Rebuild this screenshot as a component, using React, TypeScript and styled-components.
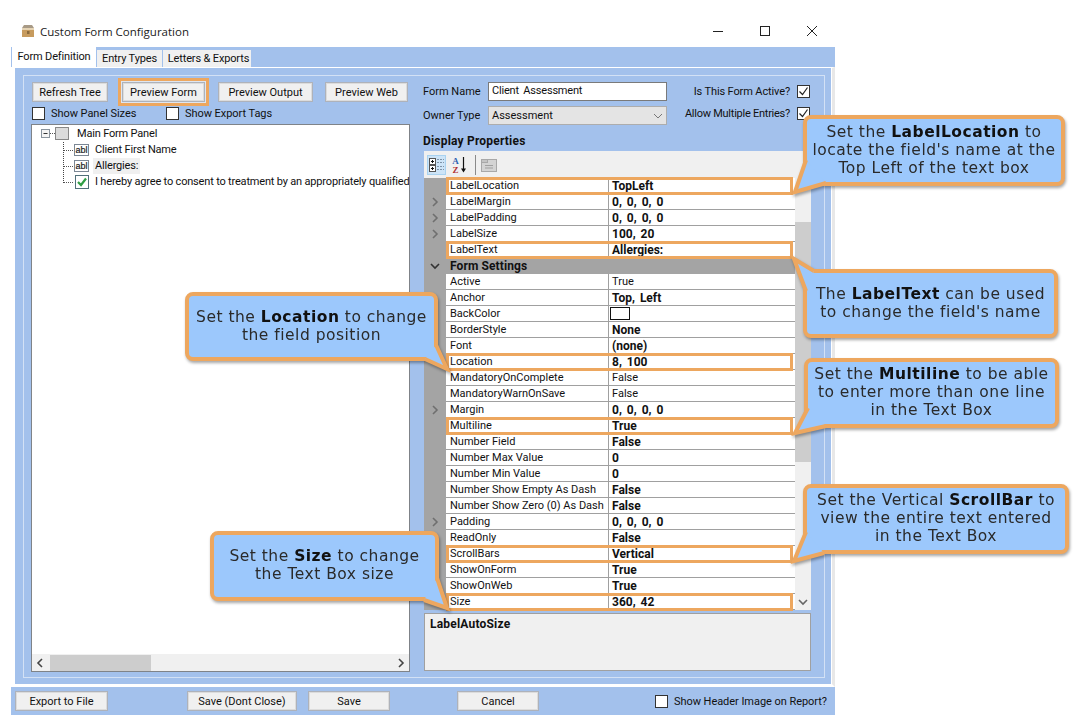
import React from "react";
import styled, { createGlobalStyle } from "styled-components";

const GlobalStyle = createGlobalStyle`
  html, body { margin: 0; padding: 0; background: #fff; }
  body { font-family: Roboto, "Liberation Sans", sans-serif; font-size: 11px; color: #111; }
`;

const BLUE = "#a3c1ec";
const ORANGE = "#eda75f";

type RowData = {
  name: string;
  value?: string;
  bold?: boolean;
  arrow?: boolean;
  mark?: boolean;
  section?: boolean;
  swatch?: boolean;
};

const rows: RowData[] = [
  { name: "LabelLocation", value: "TopLeft", bold: true, mark: true },
  { name: "LabelMargin", value: "0, 0, 0, 0", bold: true, arrow: true },
  { name: "LabelPadding", value: "0, 0, 0, 0", bold: true, arrow: true },
  { name: "LabelSize", value: "100, 20", bold: true, arrow: true },
  { name: "LabelText", value: "Allergies:", bold: true, mark: true },
  { name: "Form Settings", section: true },
  { name: "Active", value: "True" },
  { name: "Anchor", value: "Top, Left", bold: true },
  { name: "BackColor", swatch: true },
  { name: "BorderStyle", value: "None", bold: true },
  { name: "Font", value: "(none)", bold: true },
  { name: "Location", value: "8, 100", bold: true, mark: true },
  { name: "MandatoryOnComplete", value: "False" },
  { name: "MandatoryWarnOnSave", value: "False" },
  { name: "Margin", value: "0, 0, 0, 0", bold: true, arrow: true },
  { name: "Multiline", value: "True", bold: true, mark: true },
  { name: "Number Field", value: "False", bold: true },
  { name: "Number Max Value", value: "0", bold: true },
  { name: "Number Min Value", value: "0", bold: true },
  { name: "Number Show Empty As Dash", value: "False", bold: true },
  { name: "Number Show Zero (0) As Dash", value: "False", bold: true },
  { name: "Padding", value: "0, 0, 0, 0", bold: true, arrow: true },
  { name: "ReadOnly", value: "False", bold: true },
  { name: "ScrollBars", value: "Vertical", bold: true, mark: true },
  { name: "ShowOnForm", value: "True", bold: true },
  { name: "ShowOnWeb", value: "True", bold: true },
  { name: "Size", value: "360, 42", bold: true, mark: true },
];

const BoxIcon = () => (
  <svg width="16" height="16" viewBox="0 0 16 16">
    <path d="M2 5 L4 2 H12 L14 5 Z" fill="#a89a86" />
    <rect x="2" y="5" width="12" height="9" fill="#c79b5e" />
    <rect x="2" y="5" width="12" height="2" fill="#e6d4b4" />
    <rect x="7" y="8" width="2.5" height="3" fill="#8a6a3c" />
  </svg>
);

const Minimize = () => (
  <svg width="12" height="12" viewBox="0 0 12 12"><path d="M1 6.5H11" stroke="#222" fill="none" /></svg>
);
const Maximize = () => (
  <svg width="12" height="12" viewBox="0 0 12 12"><rect x="1.5" y="1.5" width="9" height="9" stroke="#222" fill="none" /></svg>
);
const CloseX = () => (
  <svg width="12" height="12" viewBox="0 0 12 12"><path d="M1 1L11 11M11 1L1 11" stroke="#222" fill="none" /></svg>
);

const Expander = () => (
  <svg width="29" height="16" viewBox="0 0 29 16">
    <rect x="0.5" y="3.5" width="8" height="8" fill="#f4f4f4" stroke="#8a949e" />
    <path d="M2.5 7.5H6.5" stroke="#333" />
    <path d="M9 7.5H14" stroke="#555" strokeDasharray="1 1" />
    <rect x="14.5" y="1.5" width="13" height="12" fill="#dcdcdc" stroke="#222" strokeDasharray="1 1" />
  </svg>
);

const AblIcon = () => (
  <svg width="16" height="16" viewBox="0 0 16 16">
    <rect x="0.5" y="2.5" width="14" height="11" fill="#fff" stroke="#7b8794" />
    <text x="7.5" y="11" textAnchor="middle" fontSize="9" fontFamily="'Liberation Sans', sans-serif" fontWeight="400" stroke="#222" strokeWidth="0.2" fill="#222">abl</text>
  </svg>
);

const CheckIcon = () => (
  <svg width="16" height="16" viewBox="0 0 16 16">
    <rect x="1.5" y="1.5" width="13" height="13" fill="#fff" stroke="#51707a" />
    <path d="M4 8L7 11L12 4.5" stroke="#2f9e44" strokeWidth="2.2" fill="none" />
  </svg>
);

const Link = ({ last }: { last?: boolean }) => (
  <svg width="11" height="16" viewBox="0 0 11 16">
    <path d={last ? "M0.5 0V9" : "M0.5 0V16"} stroke="#444" strokeDasharray="1 1" />
    <path d="M1 8.5H11" stroke="#555" strokeDasharray="1 1" />
  </svg>
);

const CategoryIcon = () => (
  <svg width="16" height="16" viewBox="0 0 16 16">
    <rect x="0.5" y="1.5" width="6" height="6" fill="#fff" stroke="#555" />
    <rect x="0.5" y="8.5" width="6" height="6" fill="#fff" stroke="#555" />
    <path d="M2 4.5H5M3.5 3V6M2 11.5H5M3.5 10V13" stroke="#111" />
    <path d="M8 2.5H15M8 5.5H15M8 9.5H15M8 12.5H15" stroke="#7f93a8" strokeDasharray="2 1" />
  </svg>
);

const SortIcon = () => (
  <svg width="16" height="18" viewBox="0 0 16 18">
    <text x="4.5" y="8" textAnchor="middle" fontSize="9" fontWeight="700" fontFamily="'Liberation Serif', serif" fill="#2d5fb0">A</text>
    <text x="4.5" y="16.5" textAnchor="middle" fontSize="9" fontWeight="700" fontFamily="'Liberation Serif', serif" fill="#b03030">Z</text>
    <path d="M12.5 1V15" stroke="#111" strokeWidth="1.2" />
    <path d="M10 12.5L12.5 16.5L15 12.5Z" fill="#111" />
  </svg>
);

const PagesIcon = () => (
  <svg width="16" height="16" viewBox="0 0 16 16">
    <rect x="0.5" y="2.5" width="15" height="12" fill="#d4d4d4" stroke="#a8a8a8" />
    <rect x="0.5" y="2.5" width="6" height="3" fill="#c4c4c4" stroke="#a8a8a8" />
    <path d="M4 8.5H12M4 11H12" stroke="#a0a0a0" />
  </svg>
);

const Chevron = ({ dir, color = "#6f6f6f", weight = 1.6 }: { dir: "right" | "down" | "left" | "up"; color?: string; weight?: number }) => {
  const paths = { right: "M3 1L7 5L3 9", down: "M1 3L5 7L9 3", left: "M7 1L3 5L7 9", up: "M1 7L5 3L9 7" };
  return (
    <svg width="10" height="10" viewBox="0 0 10 10">
      <path d={paths[dir]} fill="none" stroke={color} strokeWidth={weight} />
    </svg>
  );
};

const FlagTick = () => (
  <svg width="11" height="11" viewBox="0 0 11 11">
    <path d="M1.5 5.5L4.5 8.5L9.5 1.5" fill="none" stroke="#222" strokeWidth="1.2" />
  </svg>
);

const Callout = ({ left, top, width, height, tail, children }: {
  left: number; top: number; width: number; height: number; tail: string; children: React.ReactNode;
}) => (
  <CalloutLayer>
    <Bubble $left={left} $top={top} $width={width} $height={height}><span>{children}</span></Bubble>
    <TailSvg viewBox="0 0 1080 725">
      <path d={tail} fill="#9cc8fc" stroke={ORANGE} strokeWidth="4" strokeLinejoin="miter" />
    </TailSvg>
  </CalloutLayer>
);

export default function App() {
  return (
    <Page>
      <GlobalStyle />
      <TitleBar>
        <BoxIcon />
        <Title>Custom Form Configuration</Title>
        <WindowButtons>
          <Minimize />
          <Maximize />
          <CloseX />
        </WindowButtons>
      </TitleBar>
      <Win>
        <TabStrip>
          <Tab $active $w={84}>Form Definition</Tab>
          <Tab $w={65}>Entry Types</Tab>
          <Tab $w={88} $shift={3}>Letters &amp; Exports</Tab>
        </TabStrip>
        <TabPage>
          <GroupBox>
            <LeftCol>
              <ButtonRow>
                <PushButton $w={76} $ml={1}>Refresh Tree</PushButton>
                <PushButton $w={83} $ml={14} $mark>Preview Form</PushButton>
                <PushButton $w={95} $ml={13}>Preview Output</PushButton>
                <PushButton $w={83} $ml={12}>Preview Web</PushButton>
              </ButtonRow>
              <CheckRow>
                <Check $ml={1} />
                <CheckLabel $w={115}>Show Panel Sizes</CheckLabel>
                <Check />
                <CheckLabel>Show Export Tags</CheckLabel>
              </CheckRow>
              <Tree>
                <TreeBody>
                  <TreeRow $pad={9}>
                    <Expander />
                    <TreeText $root>Main Form Panel</TreeText>
                  </TreeRow>
                  <TreeRow $pad={31}>
                    <Link />
                    <AblIcon />
                    <TreeText>Client First Name</TreeText>
                  </TreeRow>
                  <TreeRow $pad={31}>
                    <Link />
                    <AblIcon />
                    <TreeText $selected>Allergies:</TreeText>
                  </TreeRow>
                  <TreeRow $pad={31}>
                    <Link last />
                    <CheckIcon />
                    <TreeText>I hereby agree to consent to treatment by an appropriately qualified</TreeText>
                  </TreeRow>
                </TreeBody>
                <HScroll>
                  <Chevron dir="left" color="#444" />
                  <HThumb />
                  <Chevron dir="right" color="#444" />
                </HScroll>
              </Tree>
            </LeftCol>
            <RightCol>
              <FieldRow>
                <FieldLabel>Form Name</FieldLabel>
                <TextBox>Client Assessment</TextBox>
                <FlagLabel>Is This Form Active?</FlagLabel>
                <Flag><FlagTick /></Flag>
              </FieldRow>
              <FieldRow $mt={5}>
                <FieldLabel>Owner Type</FieldLabel>
                <Combo>
                  Assessment
                  <Chevron dir="down" color="#777" weight={1} />
                </Combo>
                <FlagLabel $up>Allow Multiple Entries?</FlagLabel>
                <Flag $up><FlagTick /></Flag>
              </FieldRow>
              <Heading>Display Properties</Heading>
              <GridToolbar>
                <ToolButton $on><CategoryIcon /></ToolButton>
                <ToolButton><SortIcon /></ToolButton>
                <ToolSep />
                <ToolButton><PagesIcon /></ToolButton>
              </GridToolbar>
              <GridArea>
                <GridRows>
                  {rows.map((r) =>
                    r.section ? (
                      <SectionRow key={r.name}>
                        <Gutter><Chevron dir="down" color="#333" /></Gutter>
                        <SectionName>{r.name}</SectionName>
                      </SectionRow>
                    ) : (
                      <PropRow key={r.name + r.value} $mark={r.mark}>
                        <Gutter>{r.arrow ? <Chevron dir="right" /> : null}</Gutter>
                        <PropName>{r.name}</PropName>
                        <PropValue $bold={r.bold}>{r.swatch ? <Swatch /> : r.value}</PropValue>
                      </PropRow>
                    )
                  )}
                </GridRows>
                <VScroll>
                  <Chevron dir="up" color="#666" />
                  <VTrack><VThumb /></VTrack>
                  <Chevron dir="down" color="#666" />
                </VScroll>
              </GridArea>
              <HelpPane>LabelAutoSize</HelpPane>
            </RightCol>
          </GroupBox>
        </TabPage>
        <BottomBar>
          <PushButton $w={93} $ml={4}>Export to File</PushButton>
          <PushButton $w={110} $ml={79}>Save (Dont Close)</PushButton>
          <PushButton $w={82} $ml={11}>Save</PushButton>
          <PushButton $w={82} $ml={67}>Cancel</PushButton>
          <Check $ml={116} />
          <CheckLabel>Show Header Image on Report?</CheckLabel>
        </BottomBar>
      </Win>

      <Callout left={803} top={115} width={262} height={71} tail="M806 160L795 192L826 183">
        Set the <b>LabelLocation</b> to<br />locate the field's name at the<br />Top Left of the text box
      </Callout>
      <Callout left={803} top={269} width={255} height={69} tail="M814 271L794 259L806 291">
        The <b>LabelText</b> can be used<br />to change the field's name
      </Callout>
      <Callout left={185} top={292} width={253} height={69} tail="M436 345L447 369L425 359">
        Set the <b>Location</b> to change<br />the field position
      </Callout>
      <Callout left={804} top={358} width={255} height={70} tail="M808 408L795 433L826 426">
        Set the <b>Multiline</b> to be able<br />to enter more than one line<br />in the Text Box
      </Callout>
      <Callout left={803} top={484} width={266} height={70} tail="M806 532L794 561L824 553">
        Set the Vertical <b>ScrollBar</b> to<br />view the entire text entered<br />in the Text Box
      </Callout>
      <Callout left={210} top={531} width={229} height={70} tail="M437 578L447 608L424 600">
        Set the <b>Size</b> to change<br />the Text Box size
      </Callout>
    </Page>
  );
}

const Page = styled.div`
  position: relative;
  width: 1080px;
  height: 725px;
  overflow: hidden;
  background: #fff;
`;

const TitleBar = styled.div`
  height: 47px;
  box-sizing: border-box;
  padding: 15px 0 0 20px;
  display: flex;
  align-items: center;
`;

const Title = styled.div`
  margin-left: 4px;
  font-family: "Open Sans", sans-serif;
  font-size: 11.5px;
  color: #222;
`;

const WindowButtons = styled.div`
  margin-left: auto;
  width: 106px;
  margin-right: 262px;
  display: flex;
  justify-content: space-between;
`;

const Win = styled.div`
  margin-left: 11px;
  width: 824px;
`;

const TabStrip = styled.div`
  height: 20px;
  background: ${BLUE};
  display: flex;
  align-items: flex-end;
  padding-left: 1px;
`;

const Tab = styled.div<{ $active?: boolean; $w: number; $shift?: number }>`
  position: relative;
  box-sizing: border-box;
  width: ${(p) => p.$w}px;
  height: ${(p) => (p.$active ? "21px" : "17px")};
  margin-right: 1px;
  margin-bottom: ${(p) => (p.$active ? "-1px" : "0")};
  background: ${(p) => (p.$active ? "#fff" : "#f0f0f0")};
  letter-spacing: -0.15px;
  display: flex;
  align-items: center;
  justify-content: center;
  padding-left: ${(p) => p.$shift ?? 0}px;
  padding-bottom: ${(p) => (p.$active ? "2px" : "0")};
`;

const TabPage = styled.div`
  box-sizing: border-box;
  height: 620px;
  background: ${BLUE};
  border-left: 4px solid #fff;
  border-top: 1px solid #fff;
  border-bottom: 3px solid #fff;
  border-right: 3px solid #e8e8e8;
  box-shadow: inset -1px 0 0 #fff;
  padding: 7px 7px 6px 8px;
`;

const GroupBox = styled.div`
  box-sizing: border-box;
  height: 603px;
  border: 1px solid #d3e1f5;
  padding: 6px 0 0 7px;
  display: flex;
  gap: 13px;
`;

const LeftCol = styled.div`
  width: 379px;
  display: flex;
  flex-direction: column;
`;

const ButtonRow = styled.div`
  display: flex;
  height: 19px;
`;

const PushButton = styled.div<{ $w: number; $ml?: number; $mark?: boolean }>`
  box-sizing: border-box;
  width: ${(p) => p.$w}px;
  height: 20px;
  margin-left: ${(p) => p.$ml ?? 0}px;
  background: #f0f0f0;
  border: 1px solid #aeb2ba;
  box-shadow: inset 0 0 0 1px #dcdcdc ${(p) => (p.$mark ? `, 0 0 0 1px #dfe6f0, 0 0 0 4px ${ORANGE}` : "")};
  display: flex;
  align-items: center;
  justify-content: center;
  flex-shrink: 0;
`;

const CheckRow = styled.div`
  margin-top: 6px;
  height: 13px;
  display: flex;
  align-items: center;
`;

const Check = styled.div<{ $ml?: number }>`
  box-sizing: border-box;
  width: 13px;
  height: 13px;
  margin-left: ${(p) => p.$ml ?? 0}px;
  background: #fff;
  border: 1px solid #333;
  flex-shrink: 0;
`;

const CheckLabel = styled.div<{ $w?: number }>`
  margin-left: 6px;
  width: ${(p) => (p.$w ? `${p.$w}px` : "auto")};
  letter-spacing: -0.05px;
`;

const Tree = styled.div`
  box-sizing: border-box;
  margin-top: 4px;
  height: 548px;
  background: #fff;
  border: 1px solid #7f8388;
  display: flex;
  flex-direction: column;
`;

const TreeBody = styled.div`
  flex: 1;
  padding-top: 1px;
  overflow: hidden;
`;

const TreeRow = styled.div<{ $pad: number }>`
  height: 16px;
  padding-left: ${(p) => p.$pad}px;
  display: flex;
  align-items: center;
  white-space: nowrap;

  svg {
    flex-shrink: 0;
  }
`;

const TreeText = styled.span<{ $selected?: boolean; $root?: boolean }>`
  margin-left: ${(p) => (p.$root ? "7px" : p.$selected ? "3px" : "5px")};
  padding: 0 ${(p) => (p.$selected ? "2px" : "0")};
  line-height: 16px;
  letter-spacing: -0.18px;
  background: ${(p) => (p.$selected ? "#f0f0f0" : "transparent")};
`;

const HScroll = styled.div`
  height: 17px;
  background: #f0f0f0;
  display: flex;
  align-items: center;
  padding: 0 3px;
  justify-content: space-between;
`;

const HThumb = styled.div`
  width: 101px;
  height: 16px;
  background: #cdcdcd;
  margin-left: 5px;
  margin-right: auto;
`;

const RightCol = styled.div`
  width: 388px;
  display: flex;
  flex-direction: column;
`;

const FieldRow = styled.div<{ $mt?: number }>`
  height: 19px;
  margin-top: ${(p) => p.$mt ?? 0}px;
  display: flex;
  align-items: center;
`;

const FieldLabel = styled.div`
  width: 65px;
`;

const TextBox = styled.div`
  box-sizing: border-box;
  width: 179px;
  height: 19px;
  background: #fff;
  border: 1px solid #7a7a7a;
  padding-left: 3px;
  line-height: 16px;
  letter-spacing: -0.2px;
  word-spacing: 2px;
`;

const Combo = styled.div`
  box-sizing: border-box;
  width: 179px;
  height: 19px;
  background: #e4e4e4;
  border: 1px solid #adadad;
  padding: 0 3px 0 3px;
  display: flex;
  align-items: center;
  justify-content: space-between;
`;

const FlagLabel = styled.div<{ $up?: boolean }>`
  margin-left: auto;
  margin-right: 7px;
  margin-bottom: ${(p) => (p.$up ? "5px" : "0")};
  letter-spacing: ${(p) => (p.$up ? "-0.25px" : "-0.12px")};
`;

const Flag = styled.div<{ $up?: boolean }>`
  box-sizing: border-box;
  width: 13px;
  height: 13px;
  margin-right: 1px;
  margin-bottom: ${(p) => (p.$up ? "4px" : "0")};
  background: #fff;
  border: 1px solid #333;
  display: flex;
  align-items: center;
  justify-content: center;
`;

const Heading = styled.div`
  margin-top: 9px;
  height: 14px;
  line-height: 14px;
  font-size: 12px;
  font-weight: 700;
  letter-spacing: 0.2px;
  color: #111;
`;

const GridToolbar = styled.div`
  margin: 3px 0 0 1px;
  height: 27px;
  background: #f0f0f0;
  display: flex;
  align-items: center;
  padding-left: 3px;
`;

const ToolButton = styled.div<{ $on?: boolean }>`
  box-sizing: border-box;
  width: 19px;
  height: 20px;
  margin-right: 3px;
  display: flex;
  align-items: center;
  justify-content: center;
  background: ${(p) => (p.$on ? "#cde4f7" : "transparent")};
  border: 1px solid ${(p) => (p.$on ? "#a9d2f0" : "transparent")};
`;

const ToolSep = styled.div`
  width: 1px;
  height: 20px;
  background: #8a8a8a;
  margin: 0 3px 0 4px;
`;

const GridArea = styled.div`
  margin-left: 1px;
  display: flex;
  height: 432px;
  background: #f0f0f0;
`;

const GridRows = styled.div`
  width: 371px;
`;

const Gutter = styled.div`
  width: 22px;
  flex-shrink: 0;
  align-self: stretch;
  background: #a4a4a4;
  display: flex;
  align-items: center;
  justify-content: center;
`;

const PropRow = styled.div<{ $mark?: boolean }>`
  position: relative;
  height: 16px;
  display: flex;
  background: #fff;

  &::after {
    content: ${(p) => (p.$mark ? '""' : "none")};
    position: absolute;
    left: 22px;
    right: 2px;
    top: -1px;
    bottom: -1px;
    border: 3px solid ${ORANGE};
    pointer-events: none;
    box-sizing: border-box;
    z-index: 1;
  }
`;

const PropName = styled.div`
  box-sizing: border-box;
  width: 163px;
  padding-left: 4px;
  line-height: 16px;
  border-bottom: 1px solid #a0a0a0;
  border-right: 1px solid #a0a0a0;
  white-space: nowrap;
`;

const PropValue = styled.div<{ $bold?: boolean }>`
  box-sizing: border-box;
  flex: 1;
  padding-left: 3px;
  line-height: 16px;
  font-size: ${(p) => (p.$bold ? "12px" : "11px")};
  word-spacing: ${(p) => (p.$bold ? "2px" : "0")};
  font-weight: ${(p) => (p.$bold ? 700 : 400)};
  border-bottom: 1px solid #a0a0a0;
  display: flex;
  align-items: center;
`;

const Swatch = styled.div`
  box-sizing: border-box;
  width: 20px;
  height: 13px;
  background: #fff;
  border: 1px solid #111;
  margin-left: -2px;
`;

const SectionRow = styled.div`
  height: 16px;
  display: flex;
  background: #a4a4a4;
`;

const SectionName = styled.div`
  padding-left: 4px;
  font-size: 12px;
  font-weight: 700;
  letter-spacing: 0.1px;
  line-height: 16px;
`;

const VScroll = styled.div`
  width: 16px;
  display: flex;
  flex-direction: column;
  align-items: center;
  padding-top: 3px;
  padding-bottom: 3px;
  box-sizing: border-box;
`;

const VTrack = styled.div`
  flex: 1;
  width: 100%;
  padding-top: 31px;
`;

const VThumb = styled.div`
  width: 100%;
  height: 240px;
  background: #cdcdcd;
`;

const HelpPane = styled.div`
  box-sizing: border-box;
  margin: 3px 0 0 1px;
  height: 58px;
  background: #f0f0f0;
  border: 1px solid #a0a0a0;
  padding: 3px 5px;
  font-size: 12px;
  font-weight: 700;
  letter-spacing: 0.2px;
`;

const BottomBar = styled.div`
  height: 28px;
  background: ${BLUE};
  display: flex;
  align-items: center;
`;

const CalloutLayer = styled.div`
  position: absolute;
  inset: 0;
  pointer-events: none;
  z-index: 5;
  filter: drop-shadow(1px 2px 1.5px rgba(0, 0, 0, 0.35));
`;

const Bubble = styled.div<{ $left: number; $top: number; $width: number; $height: number }>`
  position: absolute;
  box-sizing: border-box;
  left: ${(p) => p.$left}px;
  top: ${(p) => p.$top}px;
  width: ${(p) => p.$width}px;
  height: ${(p) => p.$height}px;
  background: #9cc8fc;
  border: 4px solid ${ORANGE};
  border-radius: 8px;
  padding-bottom: 2px;
  display: flex;
  align-items: center;
  justify-content: center;
  text-align: center;
  font-family: "DejaVu Sans", Verdana, sans-serif;
  font-size: 15.5px;
  line-height: 18px;
  letter-spacing: 0.5px;
  color: #2a2a2a;
  white-space: nowrap;

  b {
    color: #111;
  }
`;

const TailSvg = styled.svg`
  position: absolute;
  left: 0;
  top: 0;
  width: 1080px;
  height: 725px;
`;
